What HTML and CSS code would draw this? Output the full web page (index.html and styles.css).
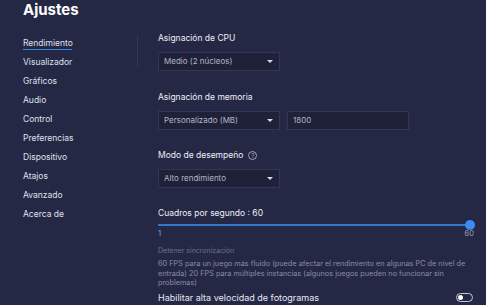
FILE: index.html
```html
<!DOCTYPE html>
<html lang="es">
<head>
    <meta charset="UTF-8">
    <title>Ajustes</title>
    <link rel="stylesheet" href="styles.css">
</head>
<body>
    <h1 class="page-title">Ajustes</h1>

    <div class="layout">
        <nav class="sidebar">
            <a class="nav-item active">Rendimiento</a>
            <a class="nav-item">Visualizador</a>
            <a class="nav-item">Gráficos</a>
            <a class="nav-item">Audio</a>
            <a class="nav-item">Control</a>
            <a class="nav-item">Preferencias</a>
            <a class="nav-item">Dispositivo</a>
            <a class="nav-item">Atajos</a>
            <a class="nav-item">Avanzado</a>
            <a class="nav-item">Acerca de</a>
        </nav>
        <div class="scroll-thumb"></div>

        <main class="content">
            <div class="group">
                <div class="label">Asignación de CPU</div>
                <div class="row">
                    <div class="select">Medio (2 núcleos)<span class="caret"></span></div>
                </div>
            </div>

            <div class="group">
                <div class="label">Asignación de memoria</div>
                <div class="row">
                    <div class="select">Personalizado (MB)<span class="caret"></span></div>
                    <div class="input">1800</div>
                </div>
            </div>

            <div class="group">
                <div class="label">Modo de desempeño <span class="help">?</span></div>
                <div class="row">
                    <div class="select">Alto rendimiento<span class="caret"></span></div>
                </div>
            </div>

            <div class="fps">
                <div class="label">Cuadros por segundo : 60</div>
                <div class="slider">
                    <div class="track"></div>
                    <div class="thumb"></div>
                </div>
                <div class="slider-scale">
                    <span>1</span>
                    <span>60</span>
                </div>
                <div class="hint-title">Detener sincronización</div>
                <p class="hint">60 FPS para un juego más fluido (puede afectar el rendimiento en algunas PC de nivel de entrada) 20 FPS para múltiples instancias (algunos juegos pueden no funcionar sin problemas)</p>
            </div>

            <div class="toggle-row">
                <span>Habilitar alta velocidad de fotogramas</span>
                <span class="toggle"><span class="knob"></span></span>
            </div>
        </main>
    </div>
</body>
</html>
```

FILE: styles.css
```css
body {
    margin: 0;
    height: 305px;
    overflow: hidden;
    background-color: #252845;
    font-family: 'Inter', 'Liberation Sans', sans-serif;
    color: #e6e7ef;
}

.page-title {
    margin: 0;
    padding: 0 0 0 23px;
    height: 22px;
    line-height: 20px;
    font-size: 15px;
    font-weight: 700;
    color: #ffffff;
}

.layout {
    display: flex;
}

.sidebar {
    display: flex;
    flex-direction: column;
    width: 114px;
    padding: 12px 0 0 23px;
}

.nav-item {
    display: block;
    height: 19px;
    line-height: 18.5px;
    font-size: 8.5px;
    color: #dfe0ea;
}

.nav-item.active {
    position: relative;
}

.nav-item.active::after {
    content: "";
    position: absolute;
    left: 0;
    top: 15px;
    width: 49px;
    height: 1px;
    background-color: #3a86e0;
}

.scroll-thumb {
    width: 1px;
    height: 32px;
    margin-top: 13px;
    background-color: #34375a;
}

.content {
    flex: 1;
    padding: 9px 0 0 20px;
}

.group {
    margin-bottom: 18px;
}

.group:first-child {
    margin-bottom: 19px;
}

.label {
    height: 14px;
    line-height: 14px;
    font-size: 8.5px;
    color: #eceef5;
    display: flex;
    align-items: center;
}

.row {
    display: flex;
    gap: 7px;
    margin-top: 7px;
}

.select, .input {
    box-sizing: border-box;
    width: 122px;
    height: 19px;
    line-height: 17px;
    padding: 0 5px;
    font-size: 8px;
    color: #b3b5c7;
    background-color: #1f2139;
    border: 1px solid #33365a;
    position: relative;
}

.caret {
    position: absolute;
    right: 6px;
    top: 7px;
    width: 0;
    height: 0;
    border-left: 3px solid transparent;
    border-right: 3px solid transparent;
    border-top: 3px solid #d8d9e4;
}

.help {
    display: inline-block;
    box-sizing: border-box;
    width: 9px;
    height: 9px;
    margin-left: 5px;
    border: 1px solid #9ea0b6;
    border-radius: 50%;
    font-size: 6px;
    line-height: 7px;
    text-align: center;
    color: #9ea0b6;
}

.slider {
    position: relative;
    height: 10px;
    margin-right: 16px;
}

.track {
    position: absolute;
    left: 0;
    right: 0;
    top: 4px;
    height: 2px;
    background-color: #2f78cc;
}

.thumb {
    position: absolute;
    right: -5px;
    top: 0;
    width: 10px;
    height: 10px;
    border-radius: 50%;
    background-color: #3a8cf2;
}

.slider-scale {
    display: flex;
    justify-content: space-between;
    margin-right: 12px;
    font-size: 7.5px;
    line-height: 8px;
    color: #9c9eb2;
}

.hint-title {
    margin-top: 8px;
    font-size: 7px;
    line-height: 10px;
    color: #6d7089;
}

.hint {
    margin: 3px 4px 0 0;
    font-size: 7.3px;
    line-height: 9.7px;
    color: #8a8ca4;
}

.toggle-row {
    display: flex;
    justify-content: space-between;
    align-items: center;
    margin-top: 4px;
    margin-right: 13px;
    font-size: 9px;
    color: #e6e7ef;
}

.toggle {
    box-sizing: border-box;
    width: 17px;
    height: 9px;
    border: 1px solid #c8c9d6;
    border-radius: 5px;
    padding: 1px;
    display: flex;
}

.knob {
    width: 5px;
    height: 5px;
    border-radius: 50%;
    background-color: #ffffff;
}
```
